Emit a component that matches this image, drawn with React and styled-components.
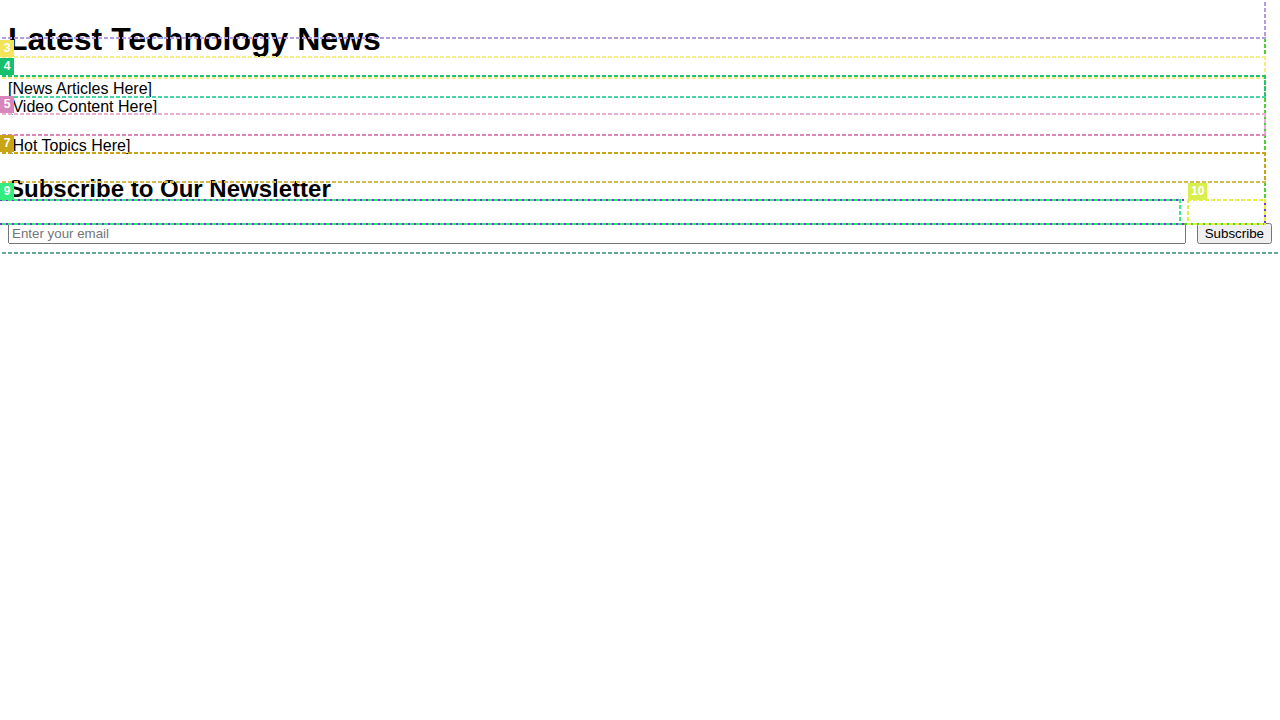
import React from "react";
import styled, { createGlobalStyle, css } from "styled-components";

const GlobalStyle = createGlobalStyle`
  html, body {
    background: #ffffff;
  }
  body {
    margin: 0 8px 8px;
    font-family: "Liberation Sans", Arial, sans-serif;
    font-size: 16px;
    color: #000000;
  }
`;

/* ---------- page content ---------- */

const Header = styled.header`
  padding-top: 0.02px;
`;

const Title = styled.h1`
  margin: 21.44px 0;
  font-size: 32px;
  font-weight: 700;
`;

const Main = styled.main``;

const Block = styled.div`
  line-height: normal;
`;

const Aside = styled.aside`
  margin-top: 21px;
`;

const Newsletter = styled.section``;

const SectionTitle = styled.h2`
  margin: 19.92px 0;
  font-size: 24px;
  font-weight: 700;
`;

const Form = styled.form`
  display: flex;
  align-items: center;
  gap: 11px;
  margin: 0;
`;

const EmailInput = styled.input`
  flex: 1;
  min-width: 0;
  font: 13.333px "Liberation Sans", Arial, sans-serif;
`;

const SubmitButton = styled.button`
  font: 13.333px "Liberation Sans", Arial, sans-serif;
`;

/* ---------- debug outline overlay ---------- */

const Overlay = styled.div`
  position: absolute;
  top: 0;
  left: 0;
  width: 1280px;
  height: 720px;
  overflow: hidden;
  pointer-events: none;
`;

const stripe = (dir, color, on, off) =>
  `repeating-linear-gradient(${dir}, ${on ? `${color} 0 ${on}px, transparent ${on}px 6px` : `transparent 0 ${off}px, ${color} ${off}px 6px`})`;

const outline = ({ $c, $bc, $dotted }) => {
  const on = $dotted ? 0 : 4;
  const off = 4;
  const bottom = $bc || $c;
  return css`
    background:
      ${stripe("90deg", $c, on, off)} left top / 100% 2px no-repeat,
      ${stripe("90deg", bottom, on, off)} left bottom / 100% 2px no-repeat,
      ${stripe("180deg", $c, on, off)} left top / 2px 100% no-repeat,
      ${stripe("180deg", $c, on, off)} right top / 2px 100% no-repeat;
  `;
};

const OutlineBox = styled.div`
  position: absolute;
  left: ${(p) => p.$l}px;
  top: ${(p) => p.$t}px;
  width: ${(p) => p.$r - p.$l}px;
  height: ${(p) => p.$b - p.$t}px;
  ${outline}
`;

const Tag = styled.span`
  position: absolute;
  left: ${(p) => p.$x}px;
  top: ${(p) => p.$y}px;
  height: 17px;
  min-width: 14px;
  box-sizing: border-box;
  padding: 0 3px;
  background: ${(p) => p.$bg};
  color: #ffffff;
  font: 700 12px/17px "Liberation Sans", Arial, sans-serif;
  text-align: center;
`;

const boxes = [
  { id: "root", l: -4, t: -4, r: 1290, b: 254, c: "#66a893" },
  { id: "body", l: -4, t: -4, r: 1266, b: 225, c: "#4ecf33" },
  { id: "header", l: -4, t: -4, r: 1266, b: 39, c: "#b59ddd" },
  { id: "b3", l: -4, t: 56, r: 1266, b: 79, c: "#f8ec84" },
  { id: "b4", l: -4, t: 75, r: 1266, b: 98, c: "#1ec66f", bc: "#48d6a2" },
  { id: "b5", l: -4, t: 113, r: 1266, b: 136, c: "#eaaed3", bc: "#da87b9" },
  { id: "b7", l: -4, t: 152, r: 1266, b: 183, c: "#c9a416", bc: "#d8bb4c" },
  { id: "form", l: -4, t: 199, r: 1266, b: 225, c: "#8a2be2", dotted: true },
  { id: "b9", l: -4, t: 199, r: 1181, b: 225, c: "#36ec82" },
  { id: "b10", l: 1187, t: 199, r: 1266, b: 225, c: "#e2ef45" },
];

const tags = [
  { n: 3, x: 0, y: 40, bg: "#f3e45c" },
  { n: 4, x: 0, y: 58, bg: "#17c06d" },
  { n: 5, x: 0, y: 96, bg: "#d886bb" },
  { n: 7, x: 0, y: 135, bg: "#c9a516" },
  { n: 9, x: 0, y: 183, bg: "#33ee7e" },
  { n: 10, x: 1188, y: 183, bg: "#d9ee4f" },
];

export default function App() {
  return (
    <>
      <GlobalStyle />
      <Header>
        <Title>Latest Technology News</Title>
      </Header>
      <Main>
        <Block>[News Articles Here]</Block>
        <Block>[Video Content Here]</Block>
        <Aside>
          <Block>[Hot Topics Here]</Block>
        </Aside>
        <Newsletter>
          <SectionTitle>Subscribe to Our Newsletter</SectionTitle>
          <Form onSubmit={(e) => e.preventDefault()}>
            <EmailInput type="email" placeholder="Enter your email" />
            <SubmitButton type="submit">Subscribe</SubmitButton>
          </Form>
        </Newsletter>
      </Main>
      <Overlay>
        {boxes.map((b) => (
          <OutlineBox
            key={b.id}
            $l={b.l}
            $t={b.t}
            $r={b.r}
            $b={b.b}
            $c={b.c}
            $bc={b.bc}
            $dotted={b.dotted}
          />
        ))}
        {tags.map((t) => (
          <Tag key={t.n} $x={t.x} $y={t.y} $bg={t.bg}>
            {t.n}
          </Tag>
        ))}
      </Overlay>
    </>
  );
}
